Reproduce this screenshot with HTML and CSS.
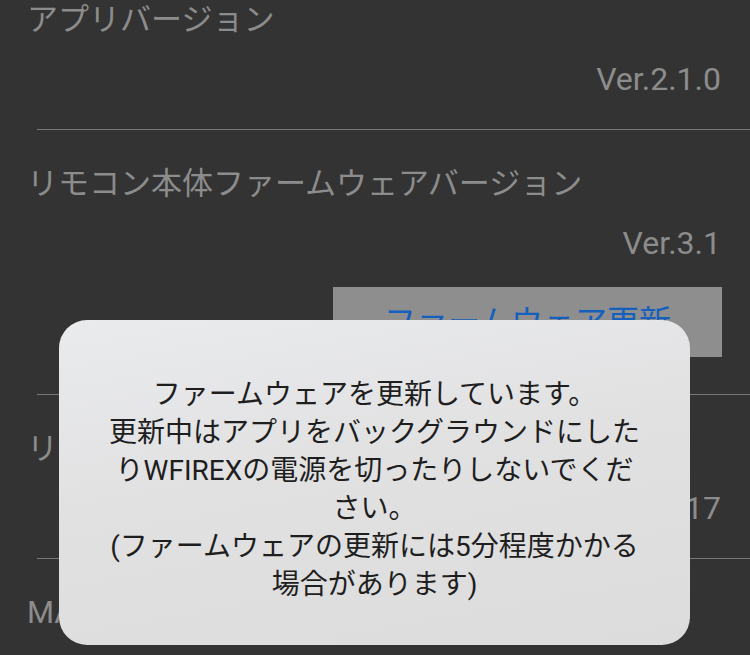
FILE: index.html
```html
<!DOCTYPE html>
<html lang="ja">
<head>
    <meta charset="UTF-8">
    <meta name="viewport" content="width=device-width, initial-scale=1.0">
    <title>設定</title>
    <link rel="stylesheet" href="styles.css">
</head>
<body>
    <div class="list">
        <div class="row">
            <p class="label">アプリバージョン</p>
            <p class="value">Ver.2.1.0</p>
            <div class="line"></div>
        </div>
        <div class="row">
            <p class="label">リモコン本体ファームウェアバージョン</p>
            <p class="value">Ver.3.1</p>
            <div class="btn">ファームウェア更新</div>
            <div class="line line-btn"></div>
        </div>
        <div class="row">
            <p class="label">リモコン本体ID</p>
            <p class="value">WX0117</p>
            <div class="line"></div>
        </div>
        <div class="row">
            <p class="label">MACアドレス</p>
        </div>
    </div>

    <!-- 更新中のダイアログ -->
    <div class="dialog">
        <p class="dialog-text">ファームウェアを更新しています。<br>更新中はアプリをバックグラウンドにした<br>りWFIREXの電源を切ったりしないでくだ<br>さい。<br>(ファームウェアの更新には5分程度かかる<br>場合があります)</p>
    </div>
</body>
</html>
```

FILE: styles.css
```css
        html, body{
            margin: 0;
            height: 100%;
            overflow: hidden;
            background: #333333;
            font-family: Roboto, "Noto Sans CJK JP", sans-serif;
        }
        .list{
            /* 画面はスクロールした状態 */
            margin-top: -34px;
        }
        .row{
            display: flex;
            flex-direction: column;
            padding-top: 34px;
        }
        .label{
            margin: 0 0 0 27px;
            height: 40px;
            line-height: 40px;
            font-size: 31px;
            color: #8c8c8c;
            white-space: nowrap;
        }
        .value{
            margin: 19px 29px 0 0;
            height: 40px;
            line-height: 40px;
            font-size: 32px;
            color: #8c8c8c;
            text-align: right;
        }
        .btn{
            align-self: flex-end;
            margin: 24px 28px 0 0;
            width: 389px;
            height: 70px;
            line-height: 70px;
            background: #8e8e8f;
            color: #1560bd;
            font-size: 32px;
            text-align: center;
        }
        .line{
            margin: 30px 0 0 37px;
            height: 1px;
            background: #767676;
        }
        .line-btn{
            margin-top: 37px;
        }
        .dialog{
            position: absolute;
            left: 59px;
            top: 320px;
            width: 631px;
            height: 325px;
            border-radius: 28px;
            background: linear-gradient(170deg, #eaebed 0%, #e1e1e2 45%, #dcdcdc 100%);
            box-sizing: border-box;
            padding-top: 56px;
        }
        .dialog-text{
            margin: 0;
            font-size: 28px;
            line-height: 38px;
            color: #1e1e1e;
            text-align: center;
        }
```
